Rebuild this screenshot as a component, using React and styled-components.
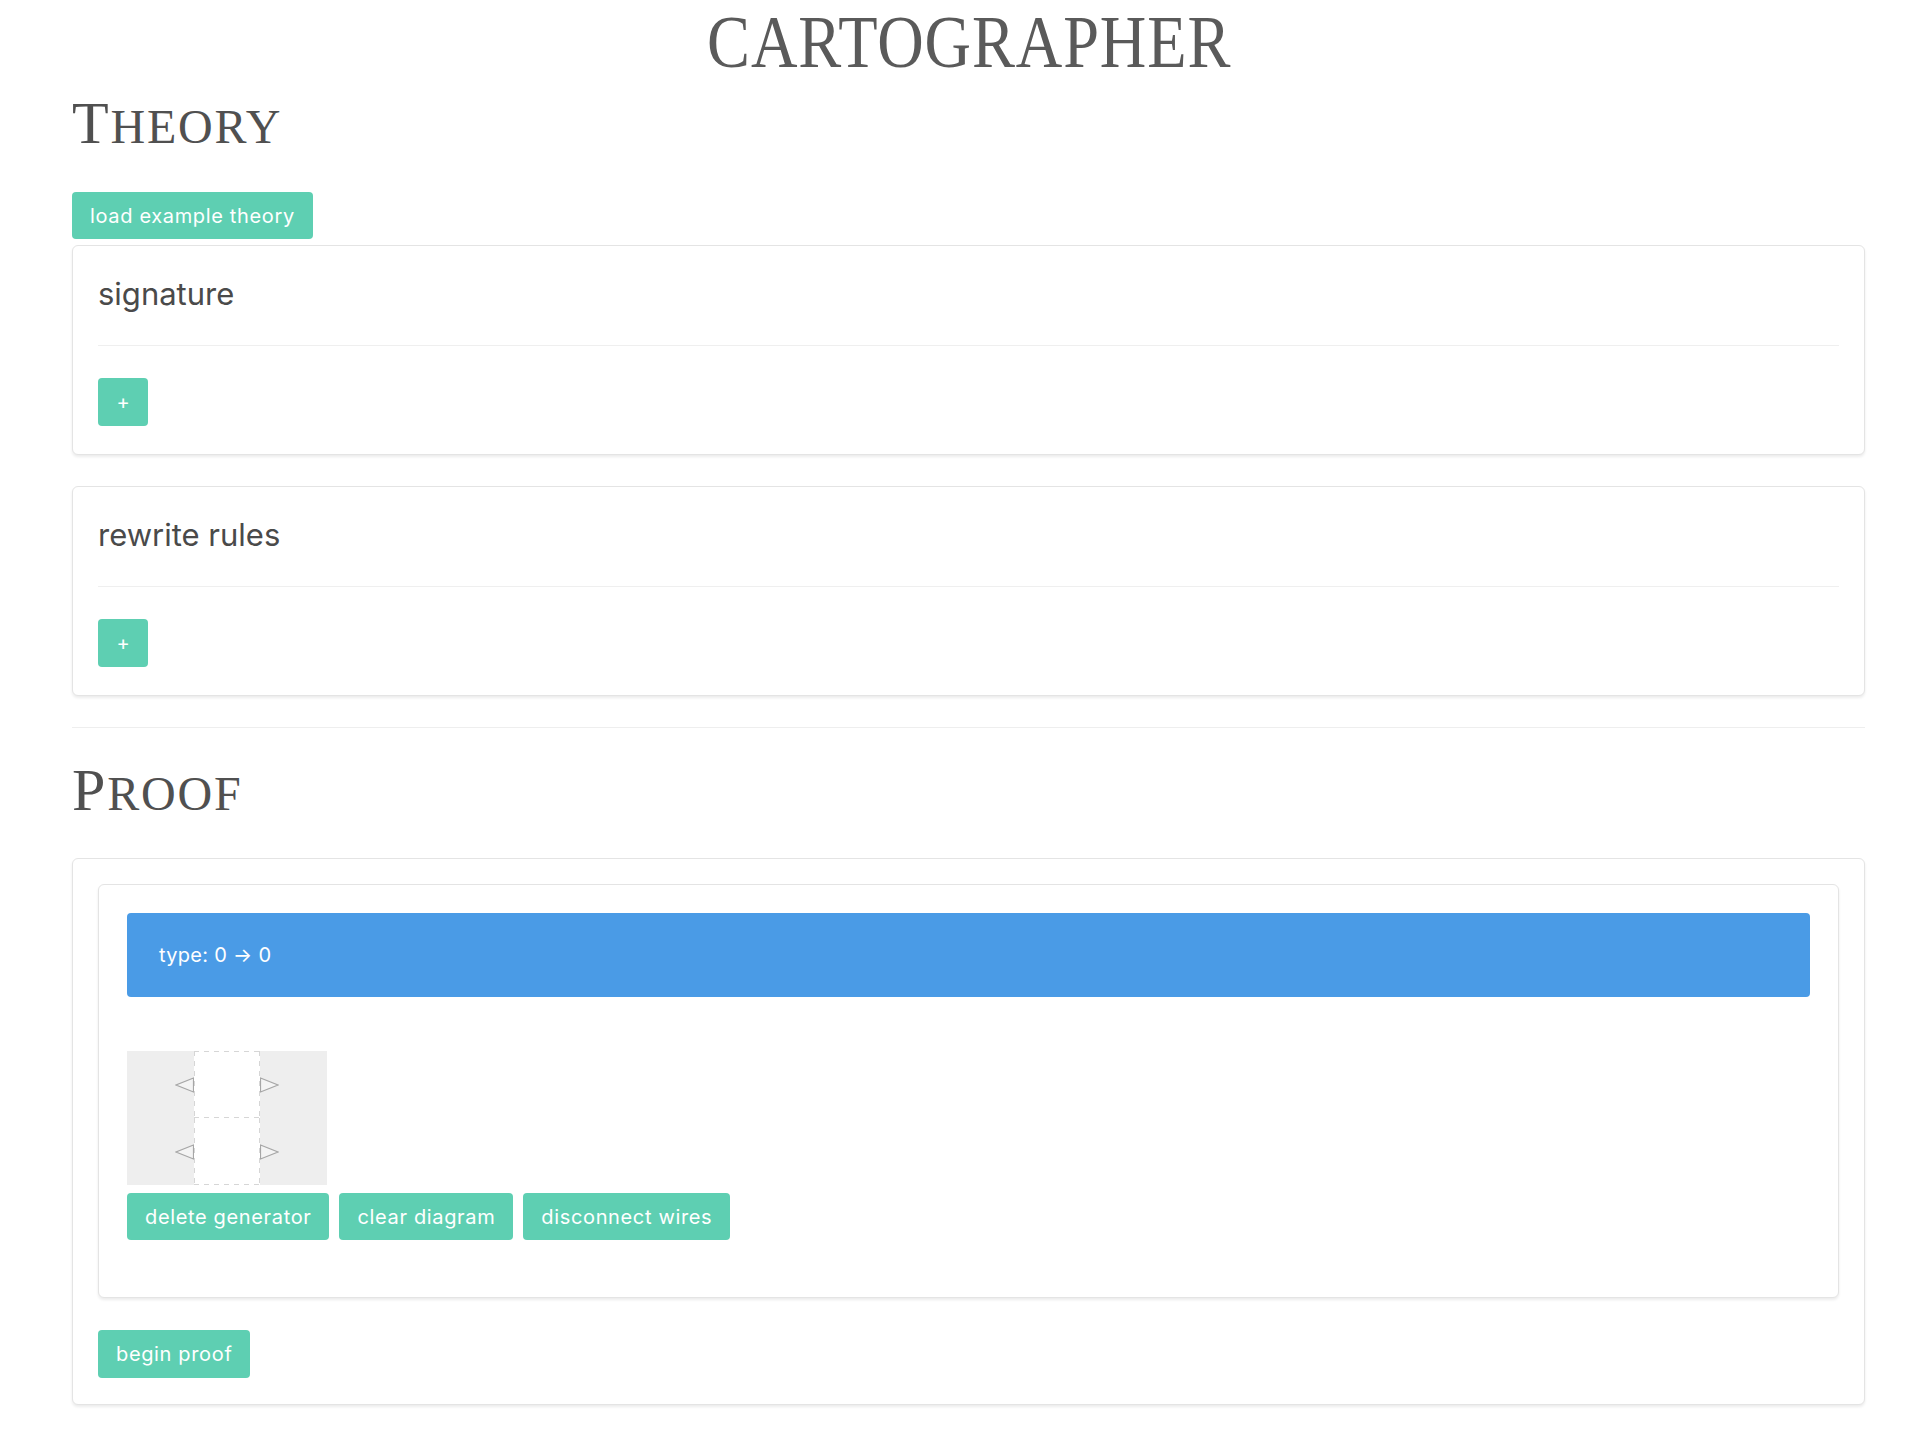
import React from "react";
import styled, { createGlobalStyle } from "styled-components";

const GlobalStyle = createGlobalStyle`
  html, body { margin: 0; padding: 0; background: #fff; }
  body {
    font-family: Inter, "Open Sans", sans-serif;
    color: #4a4a4a;
  }
  * { box-sizing: border-box; }
`;

const Page = styled.div`
  padding: 5px 57px 40px 72px;
`;

const Title = styled.h1`
  margin: 0;
  text-align: center;
  font-family: "Liberation Serif", "Times New Roman", serif;
  font-weight: 400;
  font-size: 74px;
  line-height: 74px;
  color: #5a5a5a;
`;

const TitleText = styled.span`
  display: inline-block;
  letter-spacing: 1px;
  transform: scaleX(0.87);
  transform-origin: center;
  padding-left: 1px;
`;

const Heading = styled.h2`
  margin: ${(p) => p.$mt}px 0 ${(p) => p.$mb}px;
  font-family: "Liberation Serif", "Times New Roman", serif;
  font-weight: 400;
  font-size: 60px;
  line-height: 1;
  letter-spacing: 1.8px;
  color: #505050;
`;

const SmallCap = styled.span`
  font-size: 0.8em;
  text-transform: uppercase;
`;

const Row = styled.div`
  display: flex;
  gap: 10px;
  margin-top: ${(p) => p.$mt || 0}px;
  margin-bottom: ${(p) => p.$mb || 0}px;
`;

const Button = styled.button`
  display: inline-flex;
  align-items: center;
  justify-content: center;
  height: ${(p) => p.$h || 47}px;
  width: ${(p) => (p.$w ? `${p.$w}px` : "auto")};
  padding: ${(p) => (p.$w ? "0" : "0 18px")};
  background: #5ecfb2;
  color: #fff;
  border: none;
  border-radius: 4px;
  font-family: Inter, "Open Sans", sans-serif;
  font-size: 20px;
  letter-spacing: ${(p) => (p.$w ? "0" : "0.65px")};
  cursor: pointer;
`;

const Card = styled.div`
  background: #fff;
  border: 1px solid #e4e4e4;
  border-radius: 6px;
  box-shadow: 0 2px 3px rgba(10, 10, 10, 0.08);
  padding: ${(p) => p.$pt}px ${(p) => p.$px}px ${(p) => p.$pb}px;
  margin-top: ${(p) => p.$mt || 0}px;
`;

const CardHeader = styled.div`
  padding: 5px 0 34px;
  border-bottom: 1px solid #efefef;
  font-size: 31px;
  line-height: 34px;
  color: #4a4a4a;
`;

const Rule = styled.hr`
  margin: 31px 0 0;
  border: none;
  border-top: 1px solid #eeeeee;
  height: 0;
`;

const TypeBar = styled.div`
  display: flex;
  align-items: center;
  height: 84px;
  padding-left: 32px;
  background: #4a9be6;
  border-radius: 4px;
  color: #fff;
  font-size: 20px;
  letter-spacing: 0.3px;
`;

const Diagram = styled.div`
  display: grid;
  grid-template-columns: 67px 66px 67px;
  grid-template-rows: 67px 67px;
  width: 200px;
  margin-top: 54px;
  background: #eeeeee;
`;

const Port = styled.div`
  display: flex;
  align-items: center;
  justify-content: ${(p) => (p.$side === "left" ? "flex-end" : "flex-start")};
`;

const dashH = "repeating-linear-gradient(90deg, #d6d6d6 0 5px, transparent 5px 10px)";
const dashV = "repeating-linear-gradient(180deg, #d6d6d6 0 5px, transparent 5px 10px)";

const Box = styled.div`
  background-color: #fff;
  background-image: ${(p) => (p.$first ? `${dashH}, ` : "")}${dashH}, ${dashV}, ${dashV};
  background-repeat: no-repeat;
  background-size: ${(p) => (p.$first ? "100% 1px, " : "")}100% 1px, 1px 100%, 1px 100%;
  background-position: ${(p) => (p.$first ? "0 0, " : "")}0 100%, 0 0, 100% 0;
`;

const Triangle = ({ dir }) => (
  <svg width="19" height="16" viewBox="0 0 19 16">
    {dir === "left" ? (
      <polygon points="18.5,1 1,8 18.5,15" fill="#f4f4f4" stroke="#a6a6a6" strokeWidth="1.2" />
    ) : (
      <polygon points="0.5,1 18,8 0.5,15" fill="#f4f4f4" stroke="#a6a6a6" strokeWidth="1.2" />
    )}
  </svg>
);

const rowsData = [0, 1];

export default function App() {
  return (
    <>
      <GlobalStyle />
      <Page>
        <Title>
          <TitleText>CARTOGRAPHER</TitleText>
        </Title>

        <Heading $mt={14} $mb={39}>
          T<SmallCap>heory</SmallCap>
        </Heading>
        <Row>
          <Button>load example theory</Button>
        </Row>

        <Card $pt={26} $px={25} $pb={28} $mt={6}>
          <CardHeader>signature</CardHeader>
          <Row $mt={32}>
            <Button $w={50} $h={48}>+</Button>
          </Row>
        </Card>

        <Card $pt={26} $px={25} $pb={28} $mt={31}>
          <CardHeader>rewrite rules</CardHeader>
          <Row $mt={32}>
            <Button $w={50} $h={48}>+</Button>
          </Row>
        </Card>

        <Rule />

        <Heading $mt={32} $mb={38}>
          P<SmallCap>roof</SmallCap>
        </Heading>

        <Card $pt={25} $px={25} $pb={26}>
          <Card $pt={28} $px={28} $pb={28}>
            <TypeBar>type: 0 → 0</TypeBar>
            <Diagram>
              {rowsData.map((r) => (
                <React.Fragment key={r}>
                  <Port $side="left">
                    <Triangle dir="left" />
                  </Port>
                  <Box $first={r === 0} />
                  <Port $side="right">
                    <Triangle dir="right" />
                  </Port>
                </React.Fragment>
              ))}
            </Diagram>
            <Row $mt={8} $mb={29}>
              <Button>delete generator</Button>
              <Button>clear diagram</Button>
              <Button>disconnect wires</Button>
            </Row>
          </Card>
          <Row $mt={32}>
            <Button $h={48}>begin proof</Button>
          </Row>
        </Card>
      </Page>
    </>
  );
}
